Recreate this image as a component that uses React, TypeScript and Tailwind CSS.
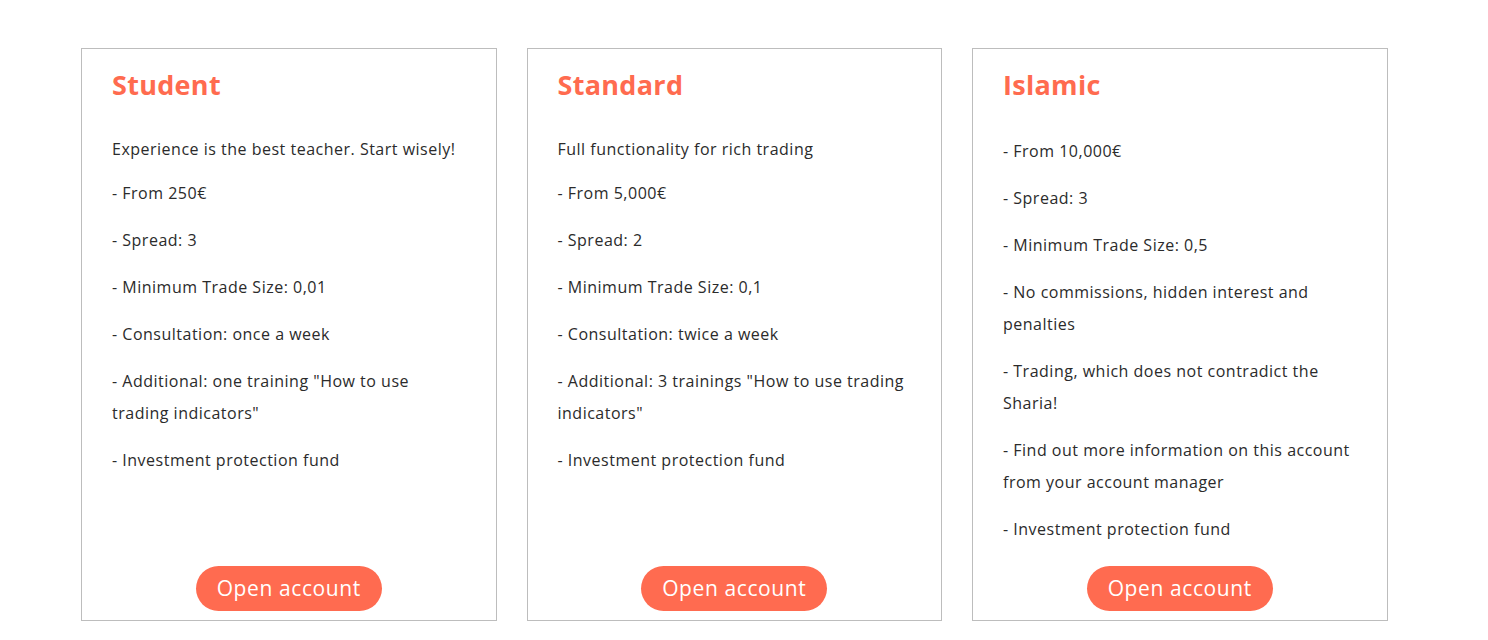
const plans = [
  {
    title: "Student",
    intro: "Experience is the best teacher. Start wisely!",
    items: [
      "- From 250€",
      "- Spread: 3",
      "- Minimum Trade Size: 0,01",
      "- Consultation: once a week",
      '- Additional: one training "How to use trading indicators"',
      "- Investment protection fund",
    ],
  },
  {
    title: "Standard",
    intro: "Full functionality for rich trading",
    items: [
      "- From 5,000€",
      "- Spread: 2",
      "- Minimum Trade Size: 0,1",
      "- Consultation: twice a week",
      '- Additional: 3 trainings "How to use trading indicators"',
      "- Investment protection fund",
    ],
  },
  {
    title: "Islamic",
    intro: "",
    items: [
      "- From 10,000€",
      "- Spread: 3",
      "- Minimum Trade Size: 0,5",
      "- No commissions, hidden interest and penalties",
      "- Trading, which does not contradict the Sharia!",
      "- Find out more information on this account from your account manager",
      "- Investment protection fund",
    ],
  },
];

const App = () => {
  return (
    <div className="w-full min-h-screen bg-white pt-[48px] pl-[81px] font-['Open_Sans',sans-serif]">
      <div className="flex gap-[30px]">
        {plans.map((plan) => (
          <div
            key={plan.title}
            className="w-[415.5px] h-[573px] border border-[#bdbdbd] pt-[21px] pb-[9px] px-[30px] flex flex-col"
          >
            <h2 className="text-[27px] leading-[30px] font-bold tracking-[0.3px] text-[#ff6b4f]">{plan.title}</h2>
            <div className={plan.intro ? "mt-[33px]" : "mt-[35px]"}>
              {plan.intro && (
                <p className="text-[16px] leading-[32px] tracking-[0.5px] text-[#2b2b2b] mb-[12px]">{plan.intro}</p>
              )}
              {plan.items.map((item) => (
                <p key={item} className="text-[16px] leading-[32px] tracking-[0.5px] text-[#2b2b2b] mb-[15px]">
                  {item}
                </p>
              ))}
            </div>
            <div className="mt-auto flex justify-center">
              <button className="h-[45px] w-[186px] rounded-full bg-[#ff6b50] text-white text-[21px] font-medium tracking-[0.6px]">
                Open account
              </button>
            </div>
          </div>
        ))}
      </div>
    </div>
  );
};

export default App;
